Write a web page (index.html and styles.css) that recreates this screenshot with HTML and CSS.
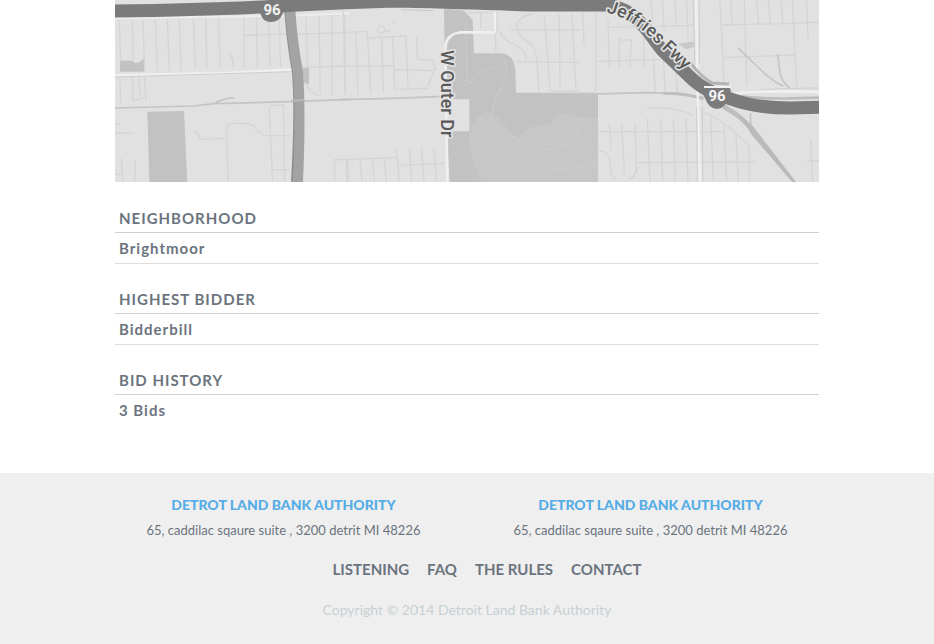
FILE: index.html
```html
<!DOCTYPE html>
<html lang="en">
<head>
<meta charset="utf-8">
<meta name="viewport" content="width=device-width, initial-scale=1">
<title>Detroit Land Bank Authority</title>
<link rel="stylesheet" href="styles.css">
</head>
<body>
<main class="listing">
  <svg class="map" viewBox="115 0 704 182" role="img" aria-label="Map of Brightmoor">
    <rect class="land" x="115" width="704" height="182"/>
    <!-- West section -->
    <g transform="translate(110 0) scale(.33333)">
      <path class="park" d="M112 335L222 333L232 548H118ZM30 182H67L76 190L88 187L103 174V215H30ZM578 202H597V254L580 246Z"/>
      <path class="street" d="M28 60L32 180M67 60L70 180M99 60L104 215M136 58L142 212M172 56L178 212M208 56L213 212M250 56L256 208M287 56L291 208M325 55L331 206M360 160Q372 180 370 203M401 52L403 202M439 52L442 202M475 50L480 201M507 49L512 200M401 106L540 102M566 102L720 98M588 52L592 202M627 48L631 280M665 46L667 285M704 44L706 285M580 202L720 198M584 250Q606 282 632 288M30 232L32 308M68 232V302L104 292M87 230L90 292M103 232L108 306M15 372L30 374M15 399H72M34 474L38 546M75 480V546M15 523H38M252 394L265 402L269 418L348 415M354 546L350 390Q348 372 366 370H400C444 368 434 405 472 407H540M478 330Q478 316 492 316L520 314L524 546M478 330L488 546M488 509H540M674 546V478H720M710 478V546"/>
      <path class="casing" d="M15 55L540 47L720 39"/>
      <path class="road" d="M15 226L350 219L548 209"/>
      <path class="edge" d="M15 231L548 215"/>
      <path class="minor" d="M15 324L250 318L310 311L540 305L720 298M310 311Q340 294 373 294"/>
    </g>
    <!-- Central section and park -->
    <g transform="translate(340 0) scale(.33333)">
      <path class="park" d="M312 25L372 32L398 60L402 160H480Q522 160 526 210L528 278H774V546H329L320 394H388V298H342L316 280Z"/>
      <path class="meadow" d="M388 395C404 350 430 336 444 334L482 370L534 416C548 382 590 377 632 370C650 330 684 338 710 350L774 355V546H425C410 500 378 460 388 395Z"/>
      <path class="trail" d="M378 70L381 250M372 255Q400 250 414 222C444 202 480 200 494 182C510 230 490 250 472 286Q460 315 456 345L494 370C520 430 600 466 660 440Q720 430 715 365M520 542C525 495 580 488 632 508C690 510 728 492 774 504"/>
      <path class="street" d="M10 34L15 280M0 98L82 94L92 280M48 98L54 284M84 114L198 108L204 262M125 114L130 280M0 200L160 196M158 112L164 270M162 208L240 210Q268 216 290 205M162 268L265 265M230 110L232 178L280 180L285 206L262 260M112 88A10 10 0 1 0 134 88A10 10 0 1 0 112 88M156 66H164M134 92L152 95M0 480L170 472M22 480L26 546M60 480L66 546M96 476L104 546M132 474L140 546M170 446L178 546M208 446L215 546M244 446L252 546M282 446L290 546M174 496L314 490M386 38H456M422 38V88M466 98L468 160M480 92C500 150 556 120 558 182M576 42C540 50 525 65 532 90C540 128 588 112 592 190L596 275M510 89L720 90M530 185L720 188M612 42L622 160L630 273M658 42L660 273M696 42L708 273M630 273H720"/>
      <path class="minor" d="M0 299L160 295L312 289"/>
      <path class="road" d="M466 36V92Q466 97 458 97H360Q314 105 316 150L322 546"/>
      <path class="edge" d="M471 36V98M350 103Q324 108 321 150"/>
      <path class="lot" d="M184 29L280 32"/>
    </g>
    <!-- East section -->
    <g transform="translate(580 0) scale(.33333)">
      <path class="street" d="M8 38L12 135M47 38V277M84 60L88 205M118 110V205M154 120L150 205M84 82L340 76M118 120H154M52 184L240 178M220 178L226 275M192 90V200M250 180L256 275M288 200L292 275M213 0L218 70M248 0L252 90M284 0L290 75M320 0L324 115M420 0L432 250M425 75L640 70L717 66M452 0L456 70M493 0L500 255M530 0L536 70M565 0L570 70M603 0L608 70M637 0L650 260M680 0L684 120M430 173L645 165M55 395H430M88 370L94 450M125 370L133 520M165 370L170 520M202 355L210 546M242 355L248 546M280 355L286 546M318 355L324 546M392 350L400 546M432 375L440 546M468 400L475 546M168 488L525 486M52 454Q88 450 90 485Q92 530 106 540M168 488Q172 535 144 538M508 440V546M692 420L698 546M680 482H717M200 325Q290 318 342 348M370 338Q420 350 510 440"/>
      <path class="minor" d="M0 283L200 278L300 280L370 292M475 145C530 195 565 240 610 258M592 163C602 195 590 238 630 264M512 340Q510 370 516 392"/>
      <path class="ramp" d="M250 280Q310 279 370 296"/>
      <path class="ramp wide" d="M430 320Q490 350 520 396"/>
      <path class="ramp-fill" d="M485 350L520 380L648 546H636L515 404Z"/>
      <path class="road" d="M348 0L353 270L360 546"/>
      <path class="edge" d="M340 0L344 190M358 0L358 190M350 320L352 546M367 320L369 546"/>
      <path class="edge" d="M455 285Q510 265 717 264"/>
      <path class="road" d="M455 282Q520 270 717 276"/>
      <path class="ramp" d="M460 287Q550 300 717 293"/>
      <path class="lot" d="M297 132L342 126V138L320 147Z"/>
    </g>
    <path class="avenue-edge" d="M289 8Q292 46 297 72Q300 112 296 182"/>
    <path class="avenue" d="M290 8Q293 46 298 72Q301 112 298 182"/>
    <path class="junction" d="M291 101L304 100"/>
    <path class="freeway-edge" d="M690 62Q700 76 712 83L729 84M735 102Q760 109 819 104"/>
    <path class="freeway" d="M110 11Q210 10 280 6T400 1Q480 3 530 5H604C636 6 650 36 662 50L690 77Q705 92 731 99Q755 108 790 108L824 107"/>
    <path class="shield" d="M259 7H285Q284 12 282 15Q279 22 271 22Q263 22 261 15Z"/>
    <path class="shield" d="M704 88H730Q732 93 729 97Q725 109 717 109Q709 109 705 98Q702 93 704 88Z"/>
    <path class="shield-bar" d="M704 87H731"/>
    <text class="route" x="272" y="15">96</text>
    <text class="route" x="717" y="101">96</text>
    <text class="street-name" transform="translate(441 50) rotate(90)">W Outer Dr</text>
    <path id="fwy" class="guide" d="M606 12Q634 20 655 42L700 85"/>
    <text class="street-name"><textPath href="#fwy">Jeffries Fwy</textPath></text>
  </svg>

  <dl class="details">
    <div class="detail"><dt>NEIGHBORHOOD</dt><dd>Brightmoor</dd></div>
    <div class="detail"><dt>HIGHEST BIDDER</dt><dd>Bidderbill</dd></div>
    <div class="detail"><dt>BID HISTORY</dt><dd>3 Bids</dd></div>
  </dl>
</main>

<footer class="footer">
  <div class="offices">
    <section class="office">
      <h2>DETROT LAND BANK AUTHORITY</h2>
      <p>65, caddilac sqaure suite , 3200 detrit MI 48226</p>
    </section>
    <section class="office">
      <h2>DETROT LAND BANK AUTHORITY</h2>
      <p>65, caddilac sqaure suite , 3200 detrit MI 48226</p>
    </section>
  </div>
  <nav>
    <ul class="links">
      <li><a href="#">LISTENING</a></li>
      <li><a href="#">FAQ</a></li>
      <li><a href="#">THE RULES</a></li>
      <li><a href="#">CONTACT</a></li>
    </ul>
  </nav>
  <p class="copyright">Copyright © 2014 Detroit Land Bank Authority</p>
</footer>
</body>
</html>
```
FILE: styles.css
```css
* { box-sizing: border-box; }

body {
  margin: 0;
  background: #fff;
  color: #6b747e;
  font-family: Lato, sans-serif;
  font-size: 14px;
  line-height: 20px;
}

.listing {
  max-width: 734px;
  margin: 0 auto;
  padding: 0 15px 48px;
}

/* Map */
.map { display: block; width: 100%; height: auto; }
.map path { fill: none; }
.map .land { fill: #e1e1e1; }
.map .park { fill: #c2c2c2; }
.map .meadow { fill: #c7c7c7; }
.map .lot { fill: #c9c9c9; stroke: #c9c9c9; stroke-width: 3; }
.map .trail { stroke: #cdcdcd; stroke-width: 4; stroke-dasharray: 6 4; }
.map .street { stroke: #d5d5d5; stroke-width: 4; }
.map .minor { stroke: #c4c4c4; stroke-width: 5; }
.map .casing { stroke: #ededed; stroke-width: 6; }
.map .road { stroke: #f0f0f0; stroke-width: 8; }
.map .edge { stroke: #cecece; stroke-width: 3; }
.map .ramp { stroke: #bdbdbd; stroke-width: 8; }
.map .wide { stroke-width: 14; }
.map .ramp-fill { fill: #bababa; }
.map .avenue { stroke: #a3a3a3; stroke-width: 10; }
.map .avenue-edge { stroke: #8f8f8f; stroke-width: 10; }
.map .junction { stroke: #b9b9b9; stroke-width: 2; }
.map .freeway { stroke: #7b7b7b; stroke-width: 13; }
.map .freeway-edge { stroke: #b3b3b3; stroke-width: 3; }
.map .shield { fill: #7b7b7b; }
.map .shield-bar { stroke: #f2f2f2; stroke-width: 2; }
.map .route {
  fill: #f4f4f4;
  font: bold 15px Roboto, sans-serif;
  text-anchor: middle;
}
.map .street-name {
  fill: #5a5a5a;
  stroke: #e4e4e4;
  stroke-width: 3px;
  stroke-linejoin: round;
  paint-order: stroke;
  font: 500 18px Roboto, sans-serif;
}

/* Details */
.details { margin: 21px 0 0; }
.detail + .detail { margin-top: 20px; }
.detail dt,
.detail dd {
  margin: 0;
  padding: 5px 4px;
  font-size: 15px;
  font-weight: 700;
  letter-spacing: 1px;
}
.detail dt { padding-bottom: 4px; border-bottom: 1px solid #d0d0d0; }
.detail dd { border-bottom: 1px solid #ddd; }
.detail:last-child dd { border-bottom: 0; }

/* Footer */
.footer {
  padding: 22px 0 25px;
  background: #efefef;
  text-align: center;
}
.offices {
  display: grid;
  grid-template-columns: 1fr 1fr;
  max-width: 734px;
  margin: 0 auto;
}
.office h2 {
  margin: 0 0 5px;
  color: #55ace6;
  font-size: 14px;
  font-weight: 900;
}
.office p { margin: 0; font-size: 13px; }
.links {
  display: flex;
  flex-wrap: wrap;
  justify-content: center;
  gap: 18px;
  margin: 19px 0 20px;
  padding: 0 0 0 40px;
  list-style: none;
}
.links a { color: inherit; font-size: 15px; font-weight: 700; text-decoration: none; }
.copyright { margin: 0; color: #c8cfd4; }
```
